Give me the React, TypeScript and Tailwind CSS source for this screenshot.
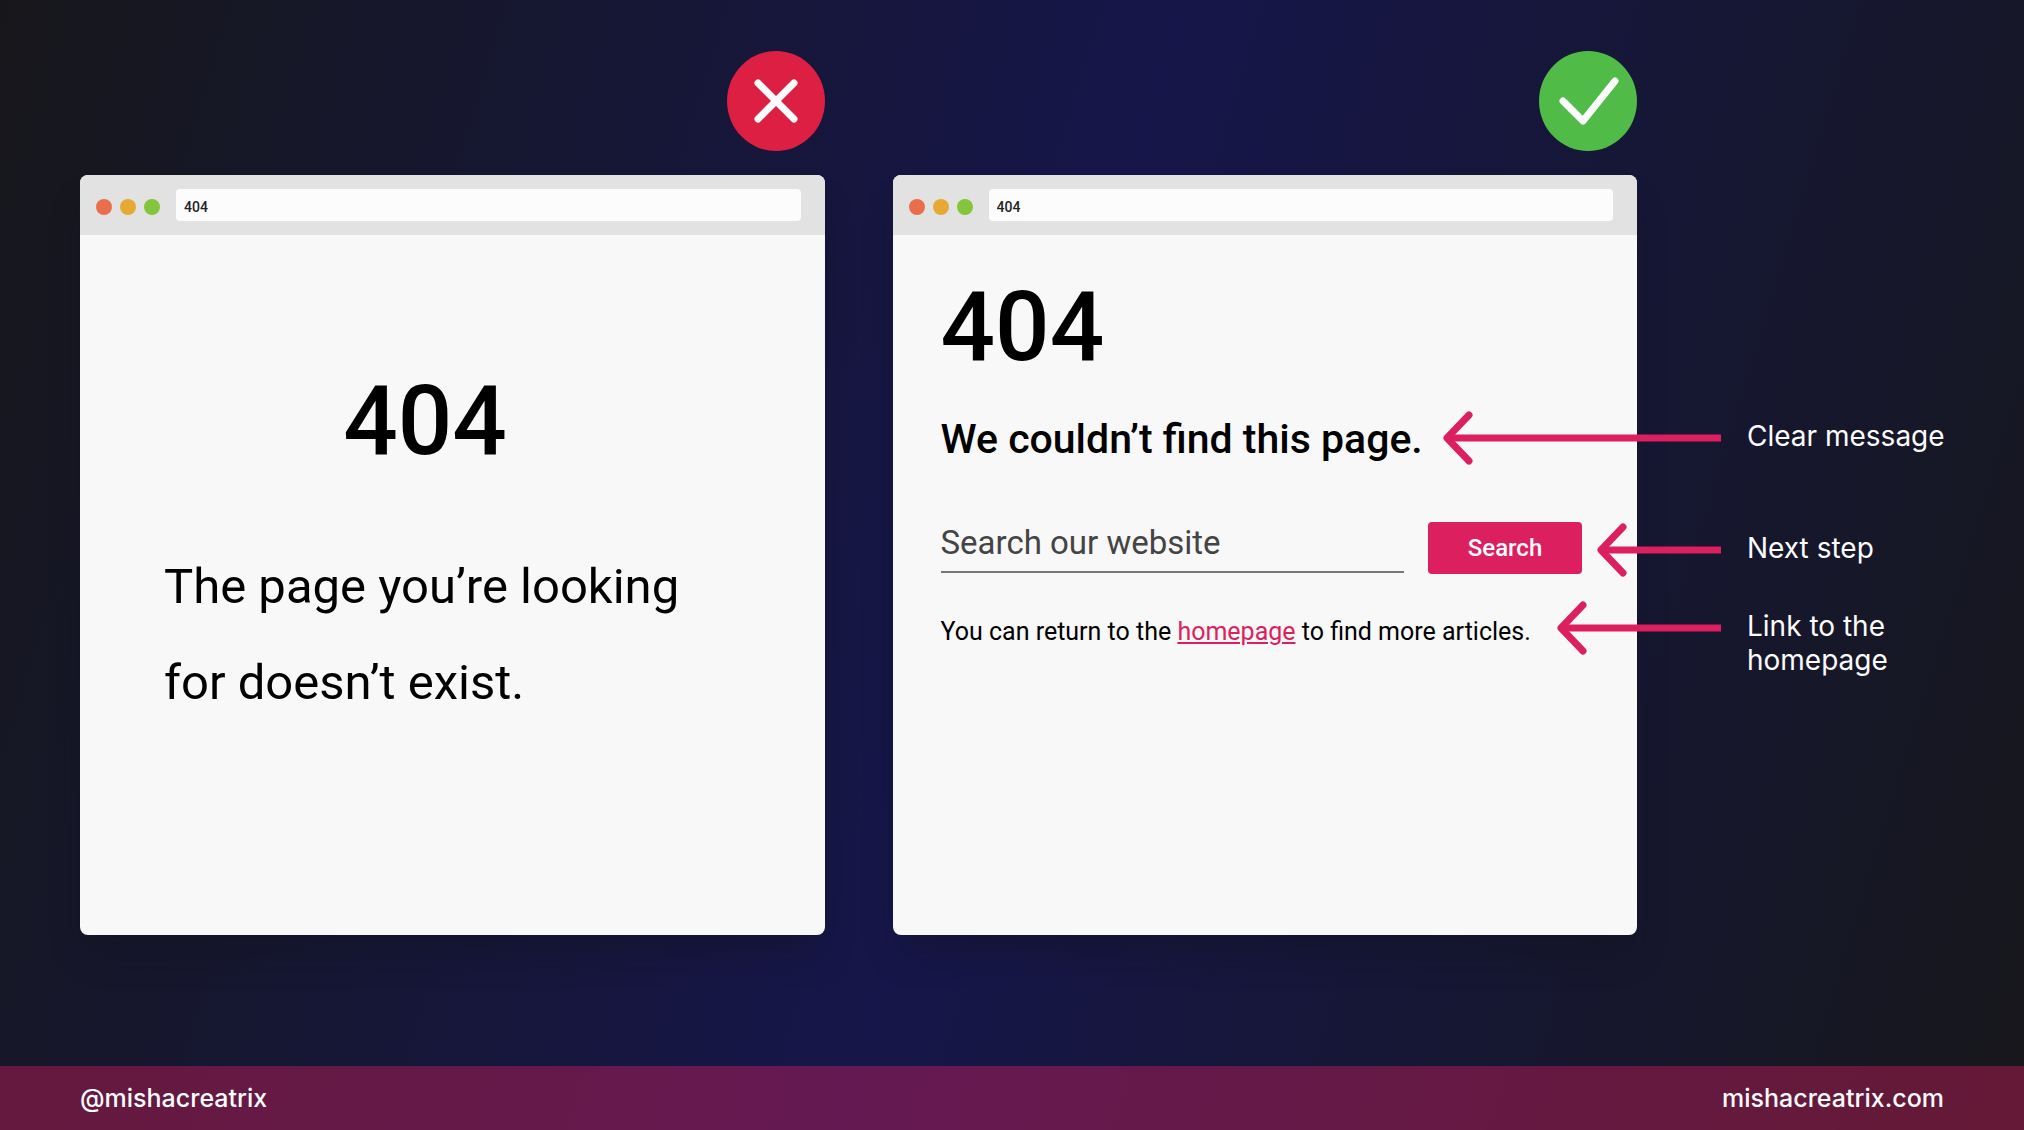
import React from "react";

interface BrowserWindowProps {
    url: string;
    children: React.ReactNode;
}

const BrowserWindow: React.FC<BrowserWindowProps> = ({ url, children }) => {
    return (
        <section className="flex w-full grow flex-col rounded-lg bg-[#f8f8f8] shadow-[0_24px_32px_-8px_rgba(17,17,28,0.35)]">
            <div className="flex h-15 items-center rounded-t-lg bg-[#e2e2e2] pr-6 pl-4">
                <div className="mt-1 flex gap-2">
                    <span className="size-4 rounded-full bg-[#e96f4c]"></span>
                    <span className="size-4 rounded-full bg-[#e6a935]"></span>
                    <span className="size-4 rounded-full bg-[#85c43d]"></span>
                </div>
                <input
                    type="text"
                    aria-label="Address"
                    defaultValue={url}
                    className="ml-4 h-8 min-w-0 grow rounded bg-[#fcfcfc] px-2 pt-1 text-sm font-medium text-[#222222] outline-none"
                />
            </div>
            {children}
        </section>
    );
};

const BadIcon: React.FC = () => {
    return (
        <svg className="size-25" viewBox="0 0 100 100" fill="none" role="img" aria-label="Bad example">
            <ellipse cx="51" cy="50" rx="49" ry="50" fill="#dc1f42" />
            <path d="M33 32L69 68M69 32L33 68" stroke="#fcfcfc" strokeWidth="7" strokeLinecap="round" />
        </svg>
    );
};

const GoodIcon: React.FC = () => {
    return (
        <svg className="size-25" viewBox="0 0 100 100" fill="none" role="img" aria-label="Good example">
            <ellipse cx="51" cy="50" rx="49" ry="50" fill="#51bb47" />
            <path d="M26 50L46 70L78 30" stroke="#fcfcfc" strokeWidth="7" strokeLinecap="round" strokeLinejoin="round" />
        </svg>
    );
};

interface ArrowProps {
    length: number;
}

// sits left of its label and reaches over the window
const Arrow: React.FC<ArrowProps> = ({ length }) => {
    return (
        <svg
            className="absolute -top-2 right-full mr-[26px]"
            width={length}
            height="54"
            viewBox={`0 0 ${length} 54`}
            fill="none"
            aria-hidden="true"
        >
            <path d={`M${length} 27H5`} stroke="#dc1f5f" strokeWidth="7" />
            <path d="M26 4L4 27L26 50" stroke="#dc1f5f" strokeWidth="7" strokeLinecap="round" strokeLinejoin="round" />
        </svg>
    );
};

const App: React.FC = () => {
    return (
        <div className="flex min-h-screen flex-col bg-[linear-gradient(107deg,#17171b_0%,#16172c_18%,#16164a_50%,#16172c_82%,#17171b_100%)] font-[Roboto,sans-serif]">
            <main className="flex grow px-20 pt-[51px] pb-[131px]">
                <div className="flex flex-1 flex-col items-end gap-6">
                    <BadIcon />
                    <BrowserWindow url="404">
                        <div className="ml-[84px] w-[522px] pt-[130px] text-black">
                            <h1 className="text-center text-8xl leading-[112px] font-medium">404</h1>
                            <p className="mt-[62px] text-[49px] leading-[96px]">
                                The page you’re looking
                                <br />
                                for doesn’t exist.
                            </p>
                        </div>
                    </BrowserWindow>
                </div>

                <div className="ml-[68px] flex flex-1 flex-col items-end gap-6">
                    <GoodIcon />
                    <BrowserWindow url="404">
                        <div className="pt-9 pr-[55px] pl-12 text-black">
                            <h1 className="text-8xl leading-[112px] font-medium">404</h1>
                            <h2 className="mt-8 text-[41px] leading-12 font-medium">We couldn’t find this page.</h2>
                            <form className="mt-[59px] flex gap-6" onSubmit={(e) => e.preventDefault()}>
                                <input
                                    type="text"
                                    aria-label="Search our website"
                                    placeholder="Search our website"
                                    className="h-[51px] min-w-0 grow border-b-2 border-[#777777] pb-2 text-[33px] outline-none placeholder:text-[#444444]"
                                />
                                <button type="submit" className="h-[52px] w-[154px] rounded bg-[#dc1f5f] text-2xl font-medium text-[#fcfcfc]">
                                    Search
                                </button>
                            </form>
                            <p className="mt-[42px] text-[25px] leading-8">
                                You can return to the <a href="#home" className="text-[#dc1f5f] underline">homepage</a> to find more articles.
                            </p>
                        </div>
                    </BrowserWindow>
                </div>

                <aside className="ml-[110px] w-[197px] shrink-0 pt-[368px] font-[Inter,sans-serif] text-[28px] leading-[34px] text-[#fcfcfc]">
                    <p className="relative whitespace-nowrap">
                        <Arrow length={278} />
                        Clear message
                    </p>
                    <p className="relative mt-[78px]">
                        <Arrow length={124} />
                        Next step
                    </p>
                    <p className="relative mt-11">
                        <Arrow length={164} />
                        Link to the homepage
                    </p>
                </aside>
            </main>

            <footer className="flex h-16 items-center justify-between bg-[#dc1f5f]/40 px-20 pt-0.5 font-[Inter,sans-serif] text-[25px] font-medium text-[#fcfcfc]">
                <a href="#profile">@mishacreatrix</a>
                <a href="#site">mishacreatrix.com</a>
            </footer>
        </div>
    );
};

export default App;
